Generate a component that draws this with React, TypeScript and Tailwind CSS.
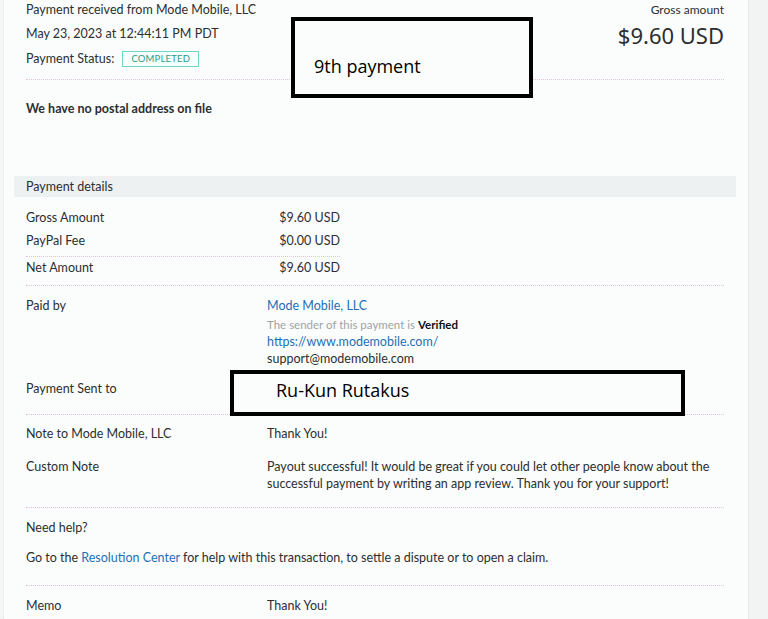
import React from 'react';

const Divider = ({ className = '' }: { className?: string }) => (
  <div className={`border-t border-dotted border-[#dcc6dc] ${className}`} />
);

export default function App() {
  return (
    <div className="relative flex h-[619px] w-[768px] overflow-hidden bg-[#fbfdfc] text-[12.5px] text-[#2c2e2f] font-['Lato',sans-serif]">
      {/* left edge strip */}
      <div className="w-[4px] shrink-0 border-r border-dotted border-[#e6e9ea] bg-[#f4f6f6]" />

      {/* main transaction column */}
      <div className="flex-1 pl-[22px] pr-[24px]">
        {/* header */}
        <div className="flex justify-between pb-[10px]">
          <div>
            <p className="leading-[20px]">Payment received from Mode Mobile, LLC</p>
            <p className="mt-[4px] leading-[20px]">May 23, 2023 at 12:44:11 PM PDT</p>
            <div className="mt-[5px] flex items-center gap-[8px] leading-[20px]">
              <span>Payment Status:</span>
              <span className="border border-[#6fd6c6] bg-[#f6fffd] px-[8px] text-[9.5px] leading-[14px] tracking-[0.2px] text-[#2d9a8a]">
                COMPLETED
              </span>
            </div>
          </div>
          <div className="text-right">
            <p className="text-[12px] leading-[20px]">Gross amount</p>
            <p className="mt-[2px] text-[22px] leading-[26px] font-['Noto_Sans',sans-serif]">$9.60 USD</p>
          </div>
        </div>
        <Divider />

        <p className="mt-[19px] font-bold leading-[20px]">We have no postal address on file</p>

        {/* payment details band */}
        <div className="-mx-[12px] mt-[57px] bg-[#eef1f1] px-[12px] leading-[21px]">Payment details</div>

        <div className="w-[314px]">
          <div className="mt-[11px] flex justify-between leading-[20px]">
            <span>Gross Amount</span>
            <span>$9.60 USD</span>
          </div>
          <div className="mt-[3px] flex justify-between pb-[5px] leading-[20px]">
            <span>PayPal Fee</span>
            <span>$0.00 USD</span>
          </div>
          <Divider />
          <div className="mt-[1px] flex justify-between pb-[7px] leading-[20px]">
            <span>Net Amount</span>
            <span>$9.60 USD</span>
          </div>
        </div>
        <Divider />

        {/* paid by */}
        <div className="mt-[10px] flex">
          <span className="w-[241px] shrink-0 leading-[20px]">Paid by</span>
          <div>
            <p className="leading-[20px] text-[#1f6fb5]">Mode Mobile, LLC</p>
            <p className="text-[11.5px] leading-[17px] text-[#9ea3a5]">
              The sender of this payment is <span className="font-bold text-[#111]">Verified</span>
            </p>
            <p className="leading-[17px] text-[#1f6fb5]">https://www.modemobile.com/</p>
            <p className="leading-[17px]">support@modemobile.com</p>
          </div>
        </div>

        <div className="mt-[12px] flex pb-[15px]">
          <span className="w-[241px] shrink-0 leading-[20px]">Payment Sent to</span>
        </div>
        <Divider />

        <div className="mt-[9px] flex">
          <span className="w-[241px] shrink-0 leading-[20px]">Note to Mode Mobile, LLC</span>
          <span className="leading-[20px]">Thank You!</span>
        </div>

        <div className="mt-[14px] flex pb-[15px]">
          <span className="w-[241px] shrink-0 leading-[17px]">Custom Note</span>
          <p className="leading-[17px]">
            Payout successful! It would be great if you could let other people know about the successful payment by
            writing an app review. Thank you for your support!
          </p>
        </div>
        <Divider />

        <p className="mt-[10px] leading-[20px]">Need help?</p>
        <p className="mt-[10px] pb-[17px] leading-[20px]">
          Go to the <span className="text-[#1f6fb5]">Resolution Center</span> for help with this transaction, to settle a
          dispute or to open a claim.
        </p>
        <Divider />

        <div className="mt-[10px] flex">
          <span className="w-[241px] shrink-0 leading-[20px]">Memo</span>
          <span className="leading-[20px]">Thank You!</span>
        </div>
      </div>

      {/* right side panel */}
      <div className="w-[20px] shrink-0 border-l border-dotted border-[#dfe3e4] bg-[#f2f4f4]" />

      {/* annotation boxes drawn over the screenshot */}
      <div className="absolute left-[291px] top-[17px] flex h-[81px] w-[242px] items-end border-[4px] border-black bg-[#fbfdfc] pb-[14px] pl-[19px] font-['Open_Sans',sans-serif] text-[18px] text-black">
        9th payment
      </div>
      <div className="absolute left-[230px] top-[370px] flex h-[46px] w-[455px] items-center border-[4px] border-black bg-[#fbfdfc] pb-[6px] pl-[42px] font-['Open_Sans',sans-serif] text-[18px] text-black">
        Ru-Kun Rutakus
      </div>
    </div>
  );
}
